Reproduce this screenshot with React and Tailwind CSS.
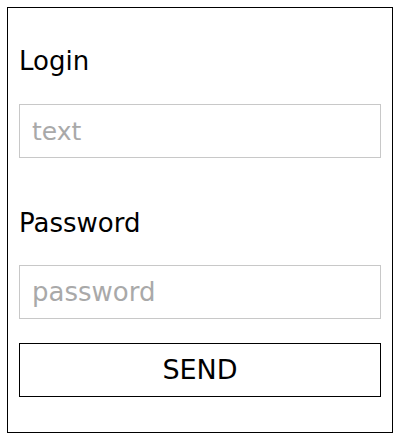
export default function App() {
  return (
    <div className="w-[400px] h-[441px] bg-white pt-[7px] pl-[7px]" style={{ fontFamily: '"DejaVu Sans", sans-serif' }}>
      <form
        className="w-[386px] h-[426px] border border-black px-[11px] flex flex-col"
        onSubmit={(e) => e.preventDefault()}
      >
        <label className="mt-[38px] text-[26px] leading-[30px] text-black">Login</label>
        <input
          type="text"
          placeholder="text"
          className="mt-[28px] h-[54px] w-full border border-[#c8c8c8] pl-[12px] text-[25px] outline-none placeholder:text-[#a9a9a9]"
        />
        <label className="mt-[50px] text-[26px] leading-[30px] text-black">Password</label>
        <input
          type="password"
          placeholder="password"
          className="mt-[27px] h-[54px] w-full border border-[#c8c8c8] pl-[12px] text-[26px] outline-none placeholder:text-[#a9a9a9]"
        />
        <button
          type="submit"
          className="mt-[24px] h-[54px] w-full border border-black bg-white text-[27px] text-black"
        >
          SEND
        </button>
      </form>
    </div>
  );
}
